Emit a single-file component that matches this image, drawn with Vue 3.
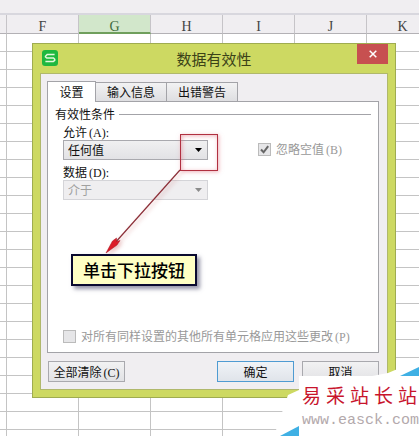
<script setup>
import { ref } from 'vue'

const columns = ['E', 'F', 'G', 'H', 'I', 'J', 'K']
const tabs = ['设置', '输入信息', '出错警告']
const active = ref('设置')
const allow = ref('任何值')
const relation = ref('介于')
const siteName = ['易', '采', '站', '长', '站']
</script>

<template>
  <main class="page">
    <div class="toolbar"></div>
    <table class="sheet">
      <thead>
        <tr>
          <th v-for="c in columns" :key="c" :class="{ first: c === 'E', selected: c === 'G' }">{{ c === 'E' ? '' : c }}</th>
        </tr>
      </thead>
      <tbody>
        <tr v-for="r in 23" :key="r">
          <td v-for="c in columns" :key="c"></td>
        </tr>
      </tbody>
    </table>

    <section class="dialog" role="dialog" aria-labelledby="dialog-title">
      <header class="titlebar">
        <svg class="logo" viewBox="0 0 16 16" aria-hidden="true">
          <rect width="16" height="16" rx="3" fill="#1fb83f" />
          <path d="M12.600 4.500H5.200L3.500 6.200V7L4.800 8H11.500L12.700 9.200V10.300L11.300 11.600H3.400" fill="none" stroke="#e4f8dc" stroke-width="1.5" />
        </svg>
        <h1 id="dialog-title">数据有效性</h1>
        <button class="close" type="button" aria-label="关闭">
          <svg viewBox="0 0 8 8" aria-hidden="true"><path d="M.7 .7L7.300 7.300M7.300 .7L.7 7.300" stroke="#fff" stroke-width="1.500" /></svg>
        </button>
      </header>

      <form class="content" @submit.prevent>
        <nav class="tabs" role="tablist">
          <button
            v-for="t in tabs"
            :key="t"
            type="button"
            role="tab"
            class="tab"
            :class="{ active: t === active }"
            :aria-selected="t === active"
            @click="active = t"
          >{{ t }}</button>
        </nav>

        <div class="panel">
          <div class="legend"><span>有效性条件</span><i></i></div>
          <div class="fields">
            <div class="left">
              <label for="allow">允许<span class="key">(A):</span></label>
              <div class="combo">
                <select id="allow" v-model="allow"><option>任何值</option></select>
                <svg viewBox="0 0 7 4" aria-hidden="true"><path d="M0 0H7L3.5 4Z" fill="#000" /></svg>
              </div>
              <label for="relation">数据<span class="key">(D):</span></label>
              <div class="combo off">
                <select id="relation" v-model="relation" disabled><option>介于</option></select>
                <svg viewBox="0 0 7 4" aria-hidden="true"><path d="M0 0H7L3.5 4Z" fill="#8c8c8c" /></svg>
              </div>
            </div>
            <label class="check blank" for="blank">
              <span class="box">
                <input id="blank" type="checkbox" checked disabled />
                <svg viewBox="0 0 9 9" aria-hidden="true"><path d="M1 4.5L3.6 7.3L8.2 1.2" fill="none" stroke="#666" stroke-width="2" /></svg>
              </span>
              <span>忽略空值<span class="key">(B)</span></span>
            </label>
          </div>
          <label class="check" for="apply">
            <span class="box"><input id="apply" type="checkbox" disabled /></span>
            <span>对所有同样设置的其他所有单元格应用这些更改<span class="key">(P)</span></span>
          </label>
        </div>

        <footer class="actions">
          <button class="btn clear" type="button">全部清除<span class="key">(C)</span></button>
          <button class="btn ok" type="submit">确定</button>
          <button class="btn" type="button">取消</button>
        </footer>
      </form>
    </section>

    <div class="highlight"></div>
    <svg class="arrow" viewBox="0 0 80 90" aria-hidden="true">
      <path d="M76 5L10 79" stroke="#8c2f38" stroke-width="1.2" />
      <path d="M2 88L8.500 76L12.500 73L12.500 76.500L16 75.500L13 80Z" fill="#dc1c28" stroke="#a51420" stroke-width=".5" />
    </svg>
    <div class="callout">单击下拉按钮</div>

    <aside class="watermark">
      <svg viewBox="0 0 145 79" aria-hidden="true">
        <path d="M0 79L14 38L25 33L114 16L145 3V79Z" fill="#fff" />
        <path d="M126 19L145 10V19Z" fill="#3fb0e4" />
        <path d="M6 79L25 69V79Z" fill="#3fb0e4" />
      </svg>
      <div class="site">
        <p class="name"><span v-for="(g, i) in siteName" :key="i">{{ g }}</span></p>
        <p class="url">www.easck.com</p>
      </div>
    </aside>
  </main>
</template>

<style>
body {
  background: #fff;
  overflow: hidden;
}
</style>

<style scoped>
* {
  box-sizing: border-box;
}
.page {
  position: relative;
  height: 100vh;
  overflow: hidden;
  font: 12px/16px "Noto Sans CJK SC", sans-serif;
  color: #111;
}
button,
select {
  font: inherit;
  color: inherit;
  margin: 0;
}
.key {
  margin-left: 2px;
  font: 12px/12px "Liberation Serif", serif;
}
.toolbar {
  height: 15px;
  background: #f0eef1;
  border-bottom: 2px solid #d8d7de;
}
.sheet {
  table-layout: fixed;
  width: 439px;
  border-collapse: separate;
  border-spacing: 0;
}
.sheet th {
  width: 72px;
  height: 19px;
  padding: 6px 0 0;
  vertical-align: top;
  background: #f0eef1;
  border-right: 1px solid #c6c4c8;
  border-bottom: 1px solid #b3b1b5;
  font: 14px/11px "Liberation Serif", serif;
  color: #444;
}
.sheet th.first {
  width: 7px;
}
.sheet th.selected {
  background: #d2e7cb;
  border-bottom: 2px solid #6f9f5c;
  color: #3d6b3d;
}
.sheet td {
  height: 18px;
  padding: 0;
  border-right: 1px solid #c4c4c4;
  border-bottom: 1px solid #c4c4c4;
}
.dialog {
  position: absolute;
  top: 43px;
  left: 32px;
  right: 23px;
  padding: 0 7px 7px;
  background: #cdd962;
  border: 1px solid #9fac50;
}
.titlebar {
  display: grid;
  grid-template-columns: 31px 1fr 31px;
  align-items: start;
  height: 29px;
}
.logo {
  width: 16px;
  height: 16px;
  margin: 6px 0 0 2px;
}
h1 {
  margin: 4px 0 0;
  font-size: 15px;
  line-height: 22px;
  font-weight: 400;
  text-align: center;
  color: #3b4218;
}
.close {
  display: grid;
  place-items: center;
  height: 20px;
  padding: 0;
  border: 0;
  background: #c75050;
}
.close svg {
  width: 8px;
  height: 8px;
}
.content {
  padding: 7px 8px 7px 6px;
  background: #f0eef1;
  border: 1px solid #b0b86c;
}
.tabs {
  display: flex;
  align-items: flex-end;
  height: 20px;
}
.tab {
  width: 71px;
  height: 19px;
  padding: 0;
  border: 1px solid #a3a3a8;
  border-width: 1px 1px 0 0;
  background: linear-gradient(#f2f2f3, #dedee1);
  line-height: 18px;
}
.tab.active {
  position: relative;
  width: 49px;
  height: 21px;
  margin-bottom: -1px;
  border-left-width: 1px;
  background: #fff;
}
.panel {
  display: flex;
  flex-direction: column;
  justify-content: space-between;
  height: 252px;
  padding: 4px 7px 8px;
  background: #fff;
  border: 1px solid #a3a3a8;
}
.legend {
  display: flex;
  align-items: center;
  gap: 4px;
}
.legend i {
  flex: 1;
  height: 1px;
  background: #a3a3a8;
}
.fields {
  display: flex;
  gap: 50px;
  flex: 1;
  padding: 2px 8px 0;
}
.left {
  display: flex;
  flex-direction: column;
  width: 145px;
}
.left label {
  height: 16px;
}
.combo {
  display: grid;
  align-items: center;
  height: 20px;
  margin-bottom: 4px;
}
.combo > * {
  grid-area: 1 / 1;
}
.combo select {
  appearance: none;
  width: 100%;
  height: 20px;
  padding: 0 0 0 4px;
  border: 1px solid #a9a9ae;
  border-radius: 0;
  background: linear-gradient(#f0f0f1, #e2e2e5);
  opacity: 1;
}
.combo svg {
  justify-self: end;
  width: 7px;
  height: 4px;
  margin-right: 6px;
  pointer-events: none;
}
.combo.off select {
  border-color: #d4d4d8;
  background: #efeef0;
  color: #a0a0a0;
}
.check {
  display: flex;
  align-items: center;
  gap: 5px;
  padding-left: 8px;
  color: #999;
  white-space: nowrap;
}
.check.blank {
  height: 16px;
  margin-top: 17px;
  padding: 0;
}
.box {
  display: grid;
  place-items: center;
}
.box > * {
  grid-area: 1 / 1;
}
.box input {
  appearance: none;
  width: 13px;
  height: 13px;
  margin: 0;
  border: 1px solid #bbb;
  background: #e6e6e8;
}
.box svg {
  width: 9px;
  height: 9px;
}
.actions {
  display: flex;
  gap: 8px;
  padding: 8px 0 0 1px;
}
.btn {
  width: 77px;
  height: 21px;
  padding: 0;
  border: 1px solid #a9a9ae;
  background: linear-gradient(#f2f2f3, #e2e2e5);
  line-height: 19px;
}
.clear {
  margin-right: auto;
}
.btn.ok {
  border-color: #4f9bd2;
  background: linear-gradient(#f0f3f7, #e0e4ea);
}
.highlight {
  position: absolute;
  top: 134px;
  left: 180px;
  width: 38px;
  height: 37px;
  border: 1px solid #b03040;
  box-shadow: 1px 1px 4px #e0708088, inset 1px 1px 4px #e0708088;
  pointer-events: none;
}
.arrow {
  position: absolute;
  top: 165px;
  left: 104px;
  width: 80px;
  height: 90px;
  filter: drop-shadow(2px 2px 2px #c0505066);
  pointer-events: none;
}
.callout {
  position: absolute;
  top: 254px;
  left: 71px;
  padding: 4px 10px;
  border: 2px solid #0a0a30;
  background: #ffffc4;
  box-shadow: 3px 3px 4px #50507099;
  font-size: 17px;
  line-height: 20px;
  font-weight: 500;
  color: #000;
}
.watermark {
  position: absolute;
  right: 0;
  bottom: 0;
  width: 145px;
}
.watermark svg {
  display: block;
  width: 145px;
  height: 79px;
}
.site {
  position: absolute;
  right: 0;
  bottom: 0;
  width: 120px;
  height: 60px;
  padding: 6px 0 0 3px;
  background: #fff;
}
.site p {
  margin: 0;
}
.name {
  display: flex;
  gap: 5px;
  font-size: 19px;
  line-height: 26px;
  color: #c8142c;
}
.url {
  padding-top: 4px;
  font: 15px/18px "Liberation Mono", monospace;
  color: #b3a9ac;
}
</style>
